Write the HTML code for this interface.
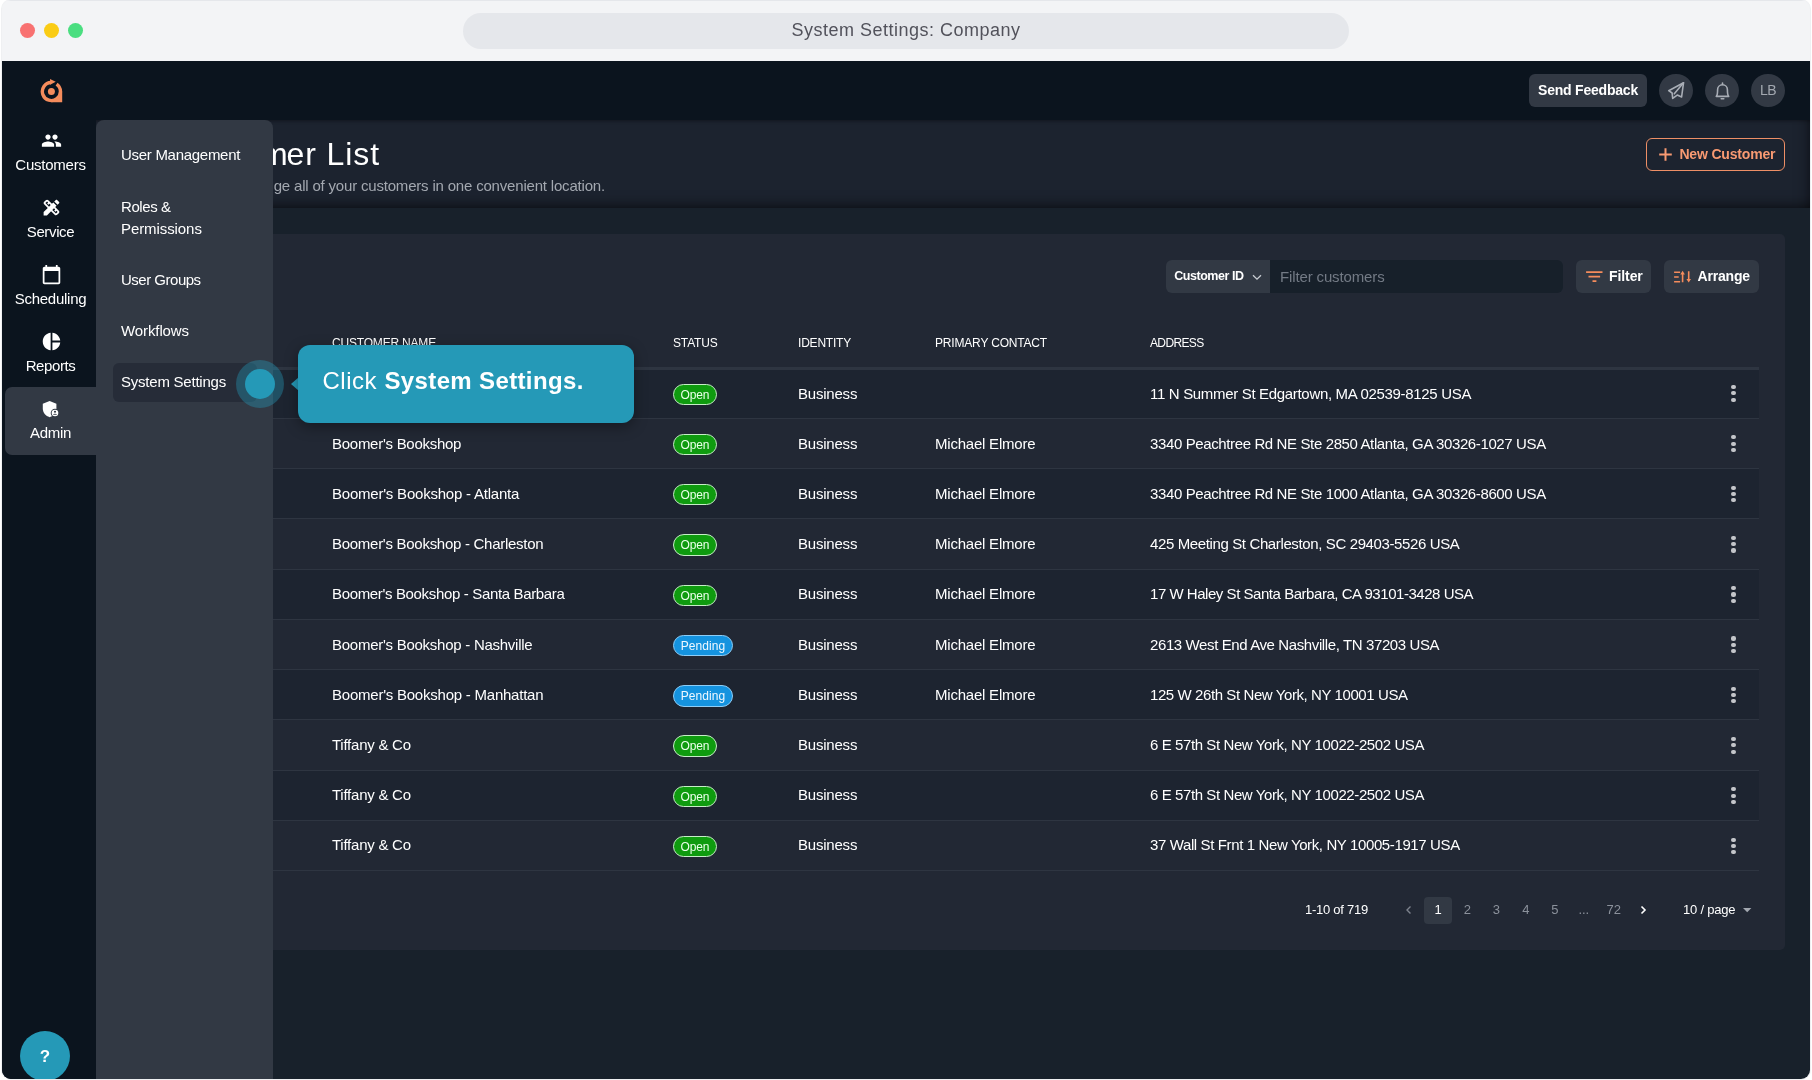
<!DOCTYPE html>
<html lang="en">
<head>
<meta charset="utf-8">
<title>System Settings: Company</title>
<style>
*{box-sizing:border-box;margin:0;padding:0}
html,body{width:1812px;height:1080px;overflow:hidden;background:#fff}
body{font-family:"Liberation Sans",sans-serif;color:#fff;position:relative}
.abs{position:absolute}
#win{will-change:transform;position:absolute;left:2px;top:0;width:1808px;height:1078.700px;border-radius:9px;overflow:hidden;background:#f3f4f6;box-shadow:0 0 0 1px rgba(120,130,150,.12)}
#titlebar{position:absolute;left:0;top:0;width:100%;height:61px;background:#f3f4f6;border-top:1px solid #e5e7eb}
.tl{position:absolute;top:21.800px;width:15px;height:15px;border-radius:50%}
#urlpill{position:absolute;left:461px;top:12.200px;width:886px;height:35.400px;border-radius:18px;background:#e5e7eb;color:#52525b;font-size:18px;line-height:35px;text-align:center;letter-spacing:.2px}
#app{position:absolute;left:0;top:61px;width:1808px;height:1018px;background:#18212b}
#sidebar{position:absolute;left:0;top:0;width:94px;height:1018px;background:#0b141e}
#topbar{position:absolute;left:94px;top:0;width:1714px;height:59px;background:#0b141e}
#pagehead{position:absolute;left:94px;top:59px;width:1714px;height:88px;background:#1c232f;box-shadow:inset 0 -15px 15px -15px rgba(0,0,0,.75), inset -15px 0 15px -15px rgba(0,0,0,.55), inset 0 4px 4px -4px rgba(0,0,0,.5)}
#card{z-index:0;position:absolute;left:120px;top:172.500px;width:1663px;height:716.500px;background:#222834;border-radius:5px}
.nav{position:absolute;left:3px;width:91px;height:67px;text-align:center;font-size:15px;color:#fff}
.nav svg{position:absolute;left:35px;top:11px;width:22px;height:22px}
.nav span{position:absolute;left:0;width:100%;top:35px;line-height:18px;white-space:nowrap}
.nav.active{background:#323944;border-radius:7px 0 0 7px}
#submenu{position:absolute;left:94px;top:59px;width:177px;height:959px;background:#323944;border-radius:8px 8px 0 0}
.sm{position:absolute;left:25px;font-size:15px;line-height:22px;color:#fff}
#smsel{position:absolute;left:17px;top:243px;width:143.500px;height:39px;background:#262c38;border-radius:6px}

.nav .ic{position:absolute;left:35.500px;top:9.200px;width:21px;height:21px}
#logo{position:absolute;left:36px;top:15px;width:26px;height:27px}
.tbtn{position:absolute;top:13px;height:33px;border-radius:6px;background:#323944;color:#fff;font-weight:bold;font-size:14px;line-height:33px;text-align:center;white-space:nowrap}
.circ{position:absolute;top:12.750px;width:33.500px;height:33.500px;border-radius:50%;background:#323944}
.circ svg{position:absolute;left:6.750px;top:6.750px;width:20px;height:20px}
#h1{position:absolute;right:1430px;top:14px;font-size:32px;line-height:42px;color:#fff;white-space:nowrap;letter-spacing:.9px;margin-top:-1px}
#sub{position:absolute;right:1205px;top:58px;font-size:15px;line-height:18px;color:#a3a8b0;white-space:nowrap;letter-spacing:-.187px;margin-top:-1px}
#newc{position:absolute;left:1550px;top:18px;width:139px;height:33px;border:1px solid #ee8f66;border-radius:6px;color:#f89a72;font-weight:bold;font-size:14px;line-height:31px;white-space:nowrap}
#newc span{position:absolute;left:32.400px;top:0}
#newc svg{position:absolute;left:10.500px;top:8px;width:15px;height:15px}
#fsel{position:absolute;left:1044px;top:26.500px;width:104px;height:33px;background:#323944;border-radius:6px 0 0 6px;white-space:nowrap;font-size:12.500px;font-weight:bold;line-height:33px;color:#fff}
#fsel span{position:absolute;left:8.200px}
#fsel svg{position:absolute;left:85.300px;top:11px;width:12px;height:12px}
#finp{position:absolute;left:1148px;top:26.500px;width:293px;height:33px;background:#17202a;border-radius:0 6px 6px 0;font-size:15px;line-height:33px;color:#737a85;padding-left:10px;white-space:nowrap}
.fbtn{position:absolute;top:26.500px;height:33px;background:#323944;border-radius:6px;font-size:14px;font-weight:bold;line-height:33px;color:#fff;white-space:nowrap}
.fbtn span{position:absolute;left:33px}
.fbtn svg{position:absolute;left:9px;top:8px;width:18px;height:18px}
.th{position:absolute;top:101px;font-size:12px;line-height:16px;color:#fff;white-space:nowrap}
#thline{position:absolute;left:151px;top:133.500px;width:1486px;height:3px;background:#2e3541;z-index:2}
.row{position:absolute;left:151px;width:1486px;height:50.280px;border-bottom:1px solid #2e3541}
.row.alt{background:#1d2430}
.td{position:absolute;top:var(--t);font-size:15px;line-height:18px;color:#fff;white-space:nowrap}
.bd{position:absolute;left:400px;top:15px;height:21.400px;border-radius:11px;font-size:12px;line-height:20.800px;color:#fff;text-align:center;border:1px solid #fff;white-space:nowrap}
.bd.o{width:44px;background:#0f9b0f;border-color:#c6eec6;color:#eaffea}
.bd.p{width:60px;background:#1593df;border-color:#8dcdf6;color:#eef8ff}
.kb{position:absolute;left:1456px;top:16.500px;width:8px;height:20px}
.kb i{position:absolute;left:2.400px;width:4.200px;height:4.200px;border-radius:50%;background:#c4c6ca}
.pg{position:absolute;top:663.100px;height:27.600px;font-size:13px;line-height:26.600px;color:#8b919b;text-align:center;width:27.600px;white-space:nowrap}
.pg svg{position:relative;top:1px}
#tip{position:absolute;left:296px;top:284px;width:336px;height:78px;border-radius:12px;background:#2599b7;box-shadow:0 4px 14px rgba(0,0,0,.35);font-size:24px;line-height:29px;color:#fff;white-space:nowrap}
#tip span{position:absolute;top:21px}
#tiparrow{position:absolute;left:289px;top:315.500px;width:0;height:0;border-top:7px solid transparent;border-bottom:7px solid transparent;border-right:8px solid #2599b7}
#beacon{position:absolute;left:234px;top:299px;width:48px;height:48px;border-radius:50%;background:rgba(37,153,183,.38)}
#beacon i{position:absolute;left:9px;top:9px;width:30px;height:30px;border-radius:50%;background:#2599b7}
#help{position:absolute;left:17.900px;top:969.900px;width:50.300px;height:50.300px;border-radius:50%;background:#2599b7;color:#fff;font-weight:bold;font-size:17px;line-height:51px;text-align:center;overflow:hidden}
</style>
</head>
<body>
<div id="win">
  <div id="titlebar">
    <div class="tl" style="left:18px;background:#f87171"></div>
    <div class="tl" style="left:42px;background:#facc15"></div>
    <div class="tl" style="left:66px;background:#4ade80"></div>
    <div id="urlpill" style="letter-spacing:0.496px">System Settings: Company</div>
  </div>
  <div id="app">
    <div id="topbar">
      <div class="tbtn" style="left:1433px;width:118px;letter-spacing:-0.208px">Send Feedback</div>
      <div class="circ" style="left:1563.250px"><svg viewBox="0 0 20 20" fill="none" stroke="#a9aeb6" stroke-width="1.600" stroke-linejoin="round" stroke-linecap="round"><path d="M17.500 1.800 L2.700 9.700 L6.100 12 L6.700 17.400 L11.200 14.100 L15.600 16 Z"/><path d="M17.500 1.800 L8.300 12.800"/></svg></div>
      <div class="circ" style="left:1609.250px"><svg viewBox="0 0 20 20" fill="none" stroke="#a9aeb6" stroke-width="1.600" stroke-linejoin="round" stroke-linecap="round"><path d="M10.500 2 v1.400"/><path d="M4.300 15.400 C5.600 14.200 5.600 12.500 5.600 8.700 A4.900 4.900 0 0 1 15.400 8.700 C15.400 12.500 15.400 14.200 16.700 15.400 Z"/><path d="M9.200 17.700 h2.600"/></svg></div>
      <div class="circ" style="left:1655.250px;font-size:14px;line-height:33.500px;text-align:center;color:#a3a8b0;letter-spacing:-.5px">LB</div>
    </div>
    <div id="pagehead">
      <div id="h1"><span style="margin-right:-2px">Custom</span>er List</div>
      <div id="sub"><span style="margin-right:1.500px">View and mana</span>ge all of your customers in one convenient location.</div>
      <div id="newc"><svg viewBox="0 0 15 15" stroke="#f89a72" stroke-width="2" fill="none"><path d="M7.500 1.200v12.600M1.200 7.500h12.600"/></svg><span style="letter-spacing:-0.169px">New Customer</span></div>
    </div>
    <div id="card">
      <div id="fsel"><span style="letter-spacing:-0.45px">Customer ID</span><svg viewBox="0 0 12 12" fill="none" stroke="#c8ccd2" stroke-width="1.300"><path d="M2 4.200l4 4 4-4"/></svg></div>
      <div id="finp" style="letter-spacing:-0.137px">Filter customers</div>
      <div class="fbtn" style="left:1454px;width:75px"><svg viewBox="0 0 18 18" stroke="#f58c5c" stroke-width="1.700" fill="none"><path d="M1.100 4.200h16.400M3.500 8.600h11.600M7.500 13.100h3.900"/></svg><span style="letter-spacing:-0.089px">Filter</span></div>
      <div class="fbtn" style="left:1542px;width:95px"><svg viewBox="0 0 18 18" stroke="#f58c5c" stroke-width="1.600" fill="none"><path d="M1.100 4.200h6M1.100 9h4.600M1.100 13.800h6"/><path d="M9.600 14.200V5.500M15.700 3.200v8.700"/><path d="M9.600 2.800l2.300 3.600h-4.600zM15.700 14.600l2.300-3.600h-4.600z" fill="#f58c5c" stroke="none"/></svg><span style="left:33.600px;letter-spacing:-0.212px">Arrange</span></div>
      <div class="th" style="left:210px;letter-spacing:-0.189px">CUSTOMER NAME</div>
      <div class="th" style="left:551px;letter-spacing:-0.144px">STATUS</div>
      <div class="th" style="left:676px;letter-spacing:-0.209px">IDENTITY</div>
      <div class="th" style="left:813px;letter-spacing:-0.179px">PRIMARY CONTACT</div>
      <div class="th" style="left:1028px;letter-spacing:-0.631px">ADDRESS</div>
      <div id="thline"></div>
      <div class="row alt" style="top:135.0px;--t:16.52px"><div class="bd o" style="letter-spacing:-0.14px">Open</div><div class="td" style="left:525px;letter-spacing:-0.209px">Business</div><div class="td" style="left:877px;letter-spacing:-0.321px">11 N Summer St Edgartown, MA 02539-8125 USA</div><div class="kb"><i style="top:0"></i><i style="top:6.300px"></i><i style="top:12.600px"></i></div></div>
      <div class="row" style="top:185.28px;--t:16.24px"><div class="td" style="left:59px;letter-spacing:-0.269px">Boomer's Bookshop</div><div class="bd o" style="letter-spacing:-0.14px">Open</div><div class="td" style="left:525px;letter-spacing:-0.209px">Business</div><div class="td" style="left:662px;letter-spacing:-0.22px">Michael Elmore</div><div class="td" style="left:877px;letter-spacing:-0.378px">3340 Peachtree Rd NE Ste 2850 Atlanta, GA 30326-1027 USA</div><div class="kb"><i style="top:0"></i><i style="top:6.300px"></i><i style="top:12.600px"></i></div></div>
      <div class="row alt" style="top:235.56px;--t:15.96px"><div class="td" style="left:59px;letter-spacing:-0.218px">Boomer's Bookshop - Atlanta</div><div class="bd o" style="letter-spacing:-0.14px">Open</div><div class="td" style="left:525px;letter-spacing:-0.209px">Business</div><div class="td" style="left:662px;letter-spacing:-0.22px">Michael Elmore</div><div class="td" style="left:877px;letter-spacing:-0.378px">3340 Peachtree Rd NE Ste 1000 Atlanta, GA 30326-8600 USA</div><div class="kb"><i style="top:0"></i><i style="top:6.300px"></i><i style="top:12.600px"></i></div></div>
      <div class="row" style="top:285.84px;--t:15.68px"><div class="td" style="left:59px;letter-spacing:-0.278px">Boomer's Bookshop - Charleston</div><div class="bd o" style="letter-spacing:-0.14px">Open</div><div class="td" style="left:525px;letter-spacing:-0.209px">Business</div><div class="td" style="left:662px;letter-spacing:-0.22px">Michael Elmore</div><div class="td" style="left:877px;letter-spacing:-0.376px">425 Meeting St Charleston, SC 29403-5526 USA</div><div class="kb"><i style="top:0"></i><i style="top:6.300px"></i><i style="top:12.600px"></i></div></div>
      <div class="row alt" style="top:336.12px;--t:15.4px"><div class="td" style="left:59px;letter-spacing:-0.344px">Boomer's Bookshop - Santa Barbara</div><div class="bd o" style="letter-spacing:-0.14px">Open</div><div class="td" style="left:525px;letter-spacing:-0.209px">Business</div><div class="td" style="left:662px;letter-spacing:-0.22px">Michael Elmore</div><div class="td" style="left:877px;letter-spacing:-0.462px">17 W Haley St Santa Barbara, CA 93101-3428 USA</div><div class="kb"><i style="top:0"></i><i style="top:6.300px"></i><i style="top:12.600px"></i></div></div>
      <div class="row" style="top:386.4px;--t:16.12px"><div class="td" style="left:59px;letter-spacing:-0.261px">Boomer's Bookshop - Nashville</div><div class="bd p" style="letter-spacing:0.093px">Pending</div><div class="td" style="left:525px;letter-spacing:-0.209px">Business</div><div class="td" style="left:662px;letter-spacing:-0.22px">Michael Elmore</div><div class="td" style="left:877px;letter-spacing:-0.39px">2613 West End Ave Nashville, TN 37203 USA</div><div class="kb"><i style="top:0"></i><i style="top:6.300px"></i><i style="top:12.600px"></i></div></div>
      <div class="row alt" style="top:436.68px;--t:15.84px"><div class="td" style="left:59px;letter-spacing:-0.23px">Boomer's Bookshop - Manhattan</div><div class="bd p" style="letter-spacing:0.093px">Pending</div><div class="td" style="left:525px;letter-spacing:-0.209px">Business</div><div class="td" style="left:662px;letter-spacing:-0.22px">Michael Elmore</div><div class="td" style="left:877px;letter-spacing:-0.411px">125 W 26th St New York, NY 10001 USA</div><div class="kb"><i style="top:0"></i><i style="top:6.300px"></i><i style="top:12.600px"></i></div></div>
      <div class="row" style="top:486.96px;--t:15.56px"><div class="td" style="left:59px;letter-spacing:-0.242px">Tiffany &amp; Co</div><div class="bd o" style="letter-spacing:-0.14px">Open</div><div class="td" style="left:525px;letter-spacing:-0.209px">Business</div><div class="td" style="left:877px;letter-spacing:-0.408px">6 E 57th St New York, NY 10022-2502 USA</div><div class="kb"><i style="top:0"></i><i style="top:6.300px"></i><i style="top:12.600px"></i></div></div>
      <div class="row alt" style="top:537.24px;--t:15.28px"><div class="td" style="left:59px;letter-spacing:-0.242px">Tiffany &amp; Co</div><div class="bd o" style="letter-spacing:-0.14px">Open</div><div class="td" style="left:525px;letter-spacing:-0.209px">Business</div><div class="td" style="left:877px;letter-spacing:-0.408px">6 E 57th St New York, NY 10022-2502 USA</div><div class="kb"><i style="top:0"></i><i style="top:6.300px"></i><i style="top:12.600px"></i></div></div>
      <div class="row" style="top:587.52px;--t:15.0px"><div class="td" style="left:59px;letter-spacing:-0.242px">Tiffany &amp; Co</div><div class="bd o" style="letter-spacing:-0.14px">Open</div><div class="td" style="left:525px;letter-spacing:-0.209px">Business</div><div class="td" style="left:877px;letter-spacing:-0.379px">37 Wall St Frnt 1 New York, NY 10005-1917 USA</div><div class="kb"><i style="top:0"></i><i style="top:6.300px"></i><i style="top:12.600px"></i></div></div>
      <div class="pg" style="left:1183px;width:63px;color:#fff;letter-spacing:-0.253px">1-10 of 719</div>
      <div class="pg" style="left:1273px"><svg width="10" height="10" viewBox="0 0 10 10" fill="none" stroke="#7d838d" stroke-width="1.400"><path d="M6.500 1.500L3 5l3.500 3.500"/></svg></div>
      <div class="pg" style="left:1302.400px;background:#323944;border-radius:4px;color:#fff">1</div>
      <div class="pg" style="left:1331.500px;">2</div>
      <div class="pg" style="left:1360.600px;">3</div>
      <div class="pg" style="left:1390px;">4</div>
      <div class="pg" style="left:1419px;">5</div>
      <div class="pg" style="left:1448px;">...</div>
      <div class="pg" style="left:1478px;">72</div>
      <div class="pg" style="left:1507px"><svg width="10" height="10" viewBox="0 0 10 10" fill="none" stroke="#fff" stroke-width="1.600"><path d="M3.500 1.500L7 5l-3.500 3.500"/></svg></div>
      <div class="pg" style="left:1561px;width:52px;color:#fff;letter-spacing:-0.224px">10 / page</div>
      <div class="pg" style="left:1620.700px;width:10px"><svg width="8.400" height="4.200" viewBox="0 0 9 4.500" style="top:-1px"><path d="M0 0h9L4.500 4.500z" fill="#a3a8b0"/></svg></div>
    </div>
    <div id="sidebar">
      <svg id="logo" viewBox="0 0 26 27">
        <path d="M13.080 6.460 A9.050 9.050 0 1 0 18.590 8.090" fill="none" stroke="#f58c5c" stroke-width="3.400"/>
        <path d="M24.200 15.500 L24.200 26.300 L13.400 26.300 L13.400 25 A9.500 9.500 0 0 0 22.900 15.500 Z" fill="#f58c5c"/>
        <path d="M12 2.900 L17.700 5.850 L12.200 8.800 Z" fill="#f58c5c"/>
        <circle cx="13.400" cy="15.500" r="3.500" fill="#f58c5c"/>
      </svg>
      <div class="nav" style="top:60px">
        <svg class="ic" viewBox="0 0 24 24" fill="#fff"><path d="M16 11c1.66 0 2.99-1.34 2.99-3S17.66 5 16 5c-1.66 0-3 1.34-3 3s1.34 3 3 3zm-8 0c1.66 0 2.99-1.34 2.99-3S9.660 5 8 5C6.340 5 5 6.340 5 8s1.340 3 3 3zm0 2c-2.330 0-7 1.170-7 3.500V19h14v-2.500c0-2.330-4.670-3.500-7-3.500zm8 0c-.29 0-.62.020-.97.050 1.160.84 1.970 1.970 1.970 3.450V19h6v-2.500c0-2.330-4.670-3.500-7-3.500z"/></svg>
        <span style="letter-spacing:-0.237px">Customers</span>
      </div>
      <div class="nav" style="top:127px">
        <svg class="ic" viewBox="0 0 24 24" fill="#fff"><path d="M16.240 11.510l1.570-1.570-3.750-3.750-1.570 1.570-4.140-4.130c-.78-.78-2.050-.78-2.830 0l-1.900 1.900c-.78.78-.78 2.050 0 2.830l4.130 4.130L3 17.250V21h3.750l4.760-4.760 4.130 4.130c.95.95 2.230.6 2.830 0l1.900-1.900c.78-.78.78-2.050 0-2.830l-4.130-4.130zm-7.060-.44L5.040 6.940l1.890-1.900L8.200 6.310 7.020 7.500l1.410 1.410 1.190-1.190 1.450 1.450-1.890 1.900zm7.880 7.890l-4.130-4.130 1.900-1.900 1.450 1.450-1.190 1.190 1.410 1.410 1.190-1.190 1.270 1.270-1.900 1.900zM20.710 7.040c.39-.39.39-1.020 0-1.410l-2.340-2.340c-.47-.47-1.120-.29-1.410 0l-1.830 1.830 3.750 3.750 1.830-1.830z"/></svg>
        <span style="letter-spacing:-0.362px">Service</span>
      </div>
      <div class="nav" style="top:194px">
        <svg class="ic" viewBox="0 0 24 24" fill="#fff"><path d="M20 3h-1V1h-2v2H7V1H5v2H4c-1.100 0-2 .90-2 2v16c0 1.100.90 2 2 2h16c1.100 0 2-.90 2-2V5c0-1.100-.90-2-2-2zm0 18H4V8h16v13z"/></svg>
        <span style="letter-spacing:-0.253px">Scheduling</span>
      </div>
      <div class="nav" style="top:261px">
        <svg class="ic" viewBox="0 0 24 24" fill="#fff"><path d="M11 2v20c-5.070-.5-9-4.790-9-10s3.930-9.500 9-10zm2.030 0v8.990H22c-.47-4.740-4.240-8.520-8.970-8.990zm0 11.010V22c4.740-.47 8.500-4.250 8.970-8.990h-8.970z"/></svg>
        <span style="letter-spacing:-0.404px">Reports</span>
      </div>
      <div class="nav active" style="top:326px;height:67.500px">
        <svg viewBox="0 0 20 20" style="position:absolute;left:37px;top:13px;width:20px;height:20px"><path d="M7.600 1.100 L14.400 3.700 V8.600 C14.400 12.600 11.600 16.200 7.600 17.200 C3.600 16.200 .8 12.600 .8 8.600 V3.700 Z" fill="#fff"/><circle cx="13" cy="13.050" r="4.300" fill="#323944"/><circle cx="13" cy="13.050" r="3.300" fill="#fff"/><circle cx="13" cy="11.800" r="1.050" fill="#323944"/><path d="M10.900 14.700 a2.200 1.300 0 0 1 4.200 0 z" fill="#323944"/></svg>
        <span style="top:37px;letter-spacing:-0.266px">Admin</span>
      </div>
      <div id="help">?</div>
    </div>
    <div id="submenu">
      <div id="smsel"></div>
      <div class="sm" style="top:24px;letter-spacing:-0.287px">User Management</div>
      <div class="sm" style="top:76px"><span style="letter-spacing:-.4px">Roles &amp;</span><br><span style="letter-spacing:-.08px">Permissions</span></div>
      <div class="sm" style="top:149px;letter-spacing:-0.494px">User Groups</div>
      <div class="sm" style="top:200px;letter-spacing:-0.101px">Workflows</div>
      <div class="sm" style="top:251px;letter-spacing:-0.226px">System Settings</div>
    </div>
    <div id="beacon"><i></i></div>
    <div id="tiparrow"></div>
    <div id="tip"><span style="left:24.500px;letter-spacing:.5px">Click </span><span style="left:86.500px;letter-spacing:.36px"><b>System Settings.</b></span></div>
  </div>
</div>
</body>
</html>
